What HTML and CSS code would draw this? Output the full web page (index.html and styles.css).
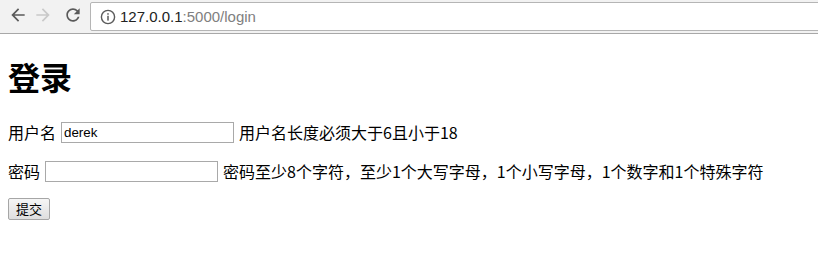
FILE: index.html
```html
<!DOCTYPE html>
<html lang="zh-CN">
<head>
<meta charset="utf-8">
<title>登录</title>
<link rel="stylesheet" href="styles.css">
</head>
<body>
<div class="toolbar">
  <svg class="nav-icon back" viewBox="0 0 24 24" width="20" height="20"><path d="M20 11H7.83l5.59-5.59L12 4l-8 8 8 8 1.41-1.41L7.83 13H20v-2z"/></svg>
  <svg class="nav-icon fwd" viewBox="0 0 24 24" width="20" height="20"><path d="M12 4l-1.41 1.41L16.17 11H4v2h12.17l-5.58 5.59L12 20l8-8z"/></svg>
  <svg class="nav-icon reload" viewBox="0 0 24 24" width="20" height="20"><path d="M17.65 6.35C16.2 4.9 14.21 4 12 4c-4.42 0-7.99 3.58-7.99 8s3.57 8 7.99 8c3.73 0 6.84-2.55 7.73-6h-2.08c-.82 2.33-3.04 4-5.65 4-3.31 0-6-2.690-6-6s2.690-6 6-6c1.66 0 3.14.69 4.22 1.78L13 11h7V4l-2.35 2.35z"/></svg>
  <div class="omnibox">
    <svg class="info" viewBox="0 0 16 16" width="16" height="16"><circle cx="8" cy="8" r="6.6" fill="none" stroke="#5a5a5a" stroke-width="1.4"/><rect x="7.25" y="6.8" width="1.5" height="4.8" fill="#5a5a5a"/><rect x="7.25" y="4.2" width="1.5" height="1.5" fill="#5a5a5a"/></svg>
    <span class="url"><span class="host">127.0.0.1</span><span class="rest">:5000/login</span></span>
  </div>
</div>
<div class="page">
  <h1 class="title">登录</h1>
  <form class="form">
    <div class="row"><label class="label">用户名</label><input class="field" type="text" value="derek"><span class="hint">用户名长度必须大于6且小于18</span></div>
    <div class="row"><label class="label">密码</label><input class="field" type="password"><span class="hint">密码至少8个字符，至少1个大写字母，1个小写字母，1个数字和1个特殊字符</span></div>
    <div class="row"><button class="submit" type="button">提交</button></div>
  </form>
</div>
</body>
</html>
```
FILE: styles.css
```css
html, body {
  margin: 0;
  padding: 0;
  background: #ffffff;
  overflow: hidden;
}
body {
  font-family: "Noto Sans CJK SC", "Liberation Sans", sans-serif;
  color: #000;
}
.toolbar {
  height: 33px;
  background: #f2f2f2;
  border-bottom: 1px solid #a8a8a8;
  display: flex;
  align-items: flex-start;
  padding-left: 8px;
  box-sizing: content-box;
}
.nav-icon {
  margin-top: 5px;
  flex: none;
}
.back { fill: #5a5a5a; }
.fwd { fill: #c9c9c9; margin-left: 5px; }
.reload { fill: #5a5a5a; margin-left: 10px; }
.omnibox {
  flex: 1;
  margin-left: 7px;
  margin-top: 2px;
  margin-right: -4px;
  height: 27px;
  background: #fff;
  border: 1px solid #b5b5b5;
  border-radius: 2px;
  display: flex;
  align-items: center;
  padding-left: 9px;
}
.info { flex: none; }
.url {
  margin-left: 4px;
  font-family: "Liberation Sans", sans-serif;
  font-size: 15px;
  line-height: 18px;
}
.host { color: #222; }
.rest { color: #808080; }
.page {
  padding: 0 8px;
}
.title {
  margin: 23px 0 0;
  font-size: 32px;
  line-height: 38px;
  font-weight: bold;
}
.form {
  margin: 25px 0 0;
  display: flex;
  flex-direction: column;
  gap: 15px;
}
.row {
  display: flex;
  align-items: center;
  gap: 5px;
  height: 24px;
  font-size: 16px;
  line-height: 24px;
  white-space: nowrap;
}
.row:last-child { height: 22px; }
.field {
  width: 173px;
  height: 21px;
  box-sizing: border-box;
  margin: 0;
  padding: 1px 2px;
  border: 1px solid #a9a9a9;
  font-family: "Liberation Sans", sans-serif;
  font-size: 13.33px;
  color: #000;
  outline: none;
}
.submit {
  height: 22px;
  margin: 0;
  padding: 0 7px;
  font-family: "Noto Sans CJK SC", sans-serif;
  font-size: 13px;
  line-height: 18px;
  color: #000;
  background: linear-gradient(#f6f6f6, #dedede);
  border: 1px solid #a6a6a6;
  border-radius: 2px;
}
```
